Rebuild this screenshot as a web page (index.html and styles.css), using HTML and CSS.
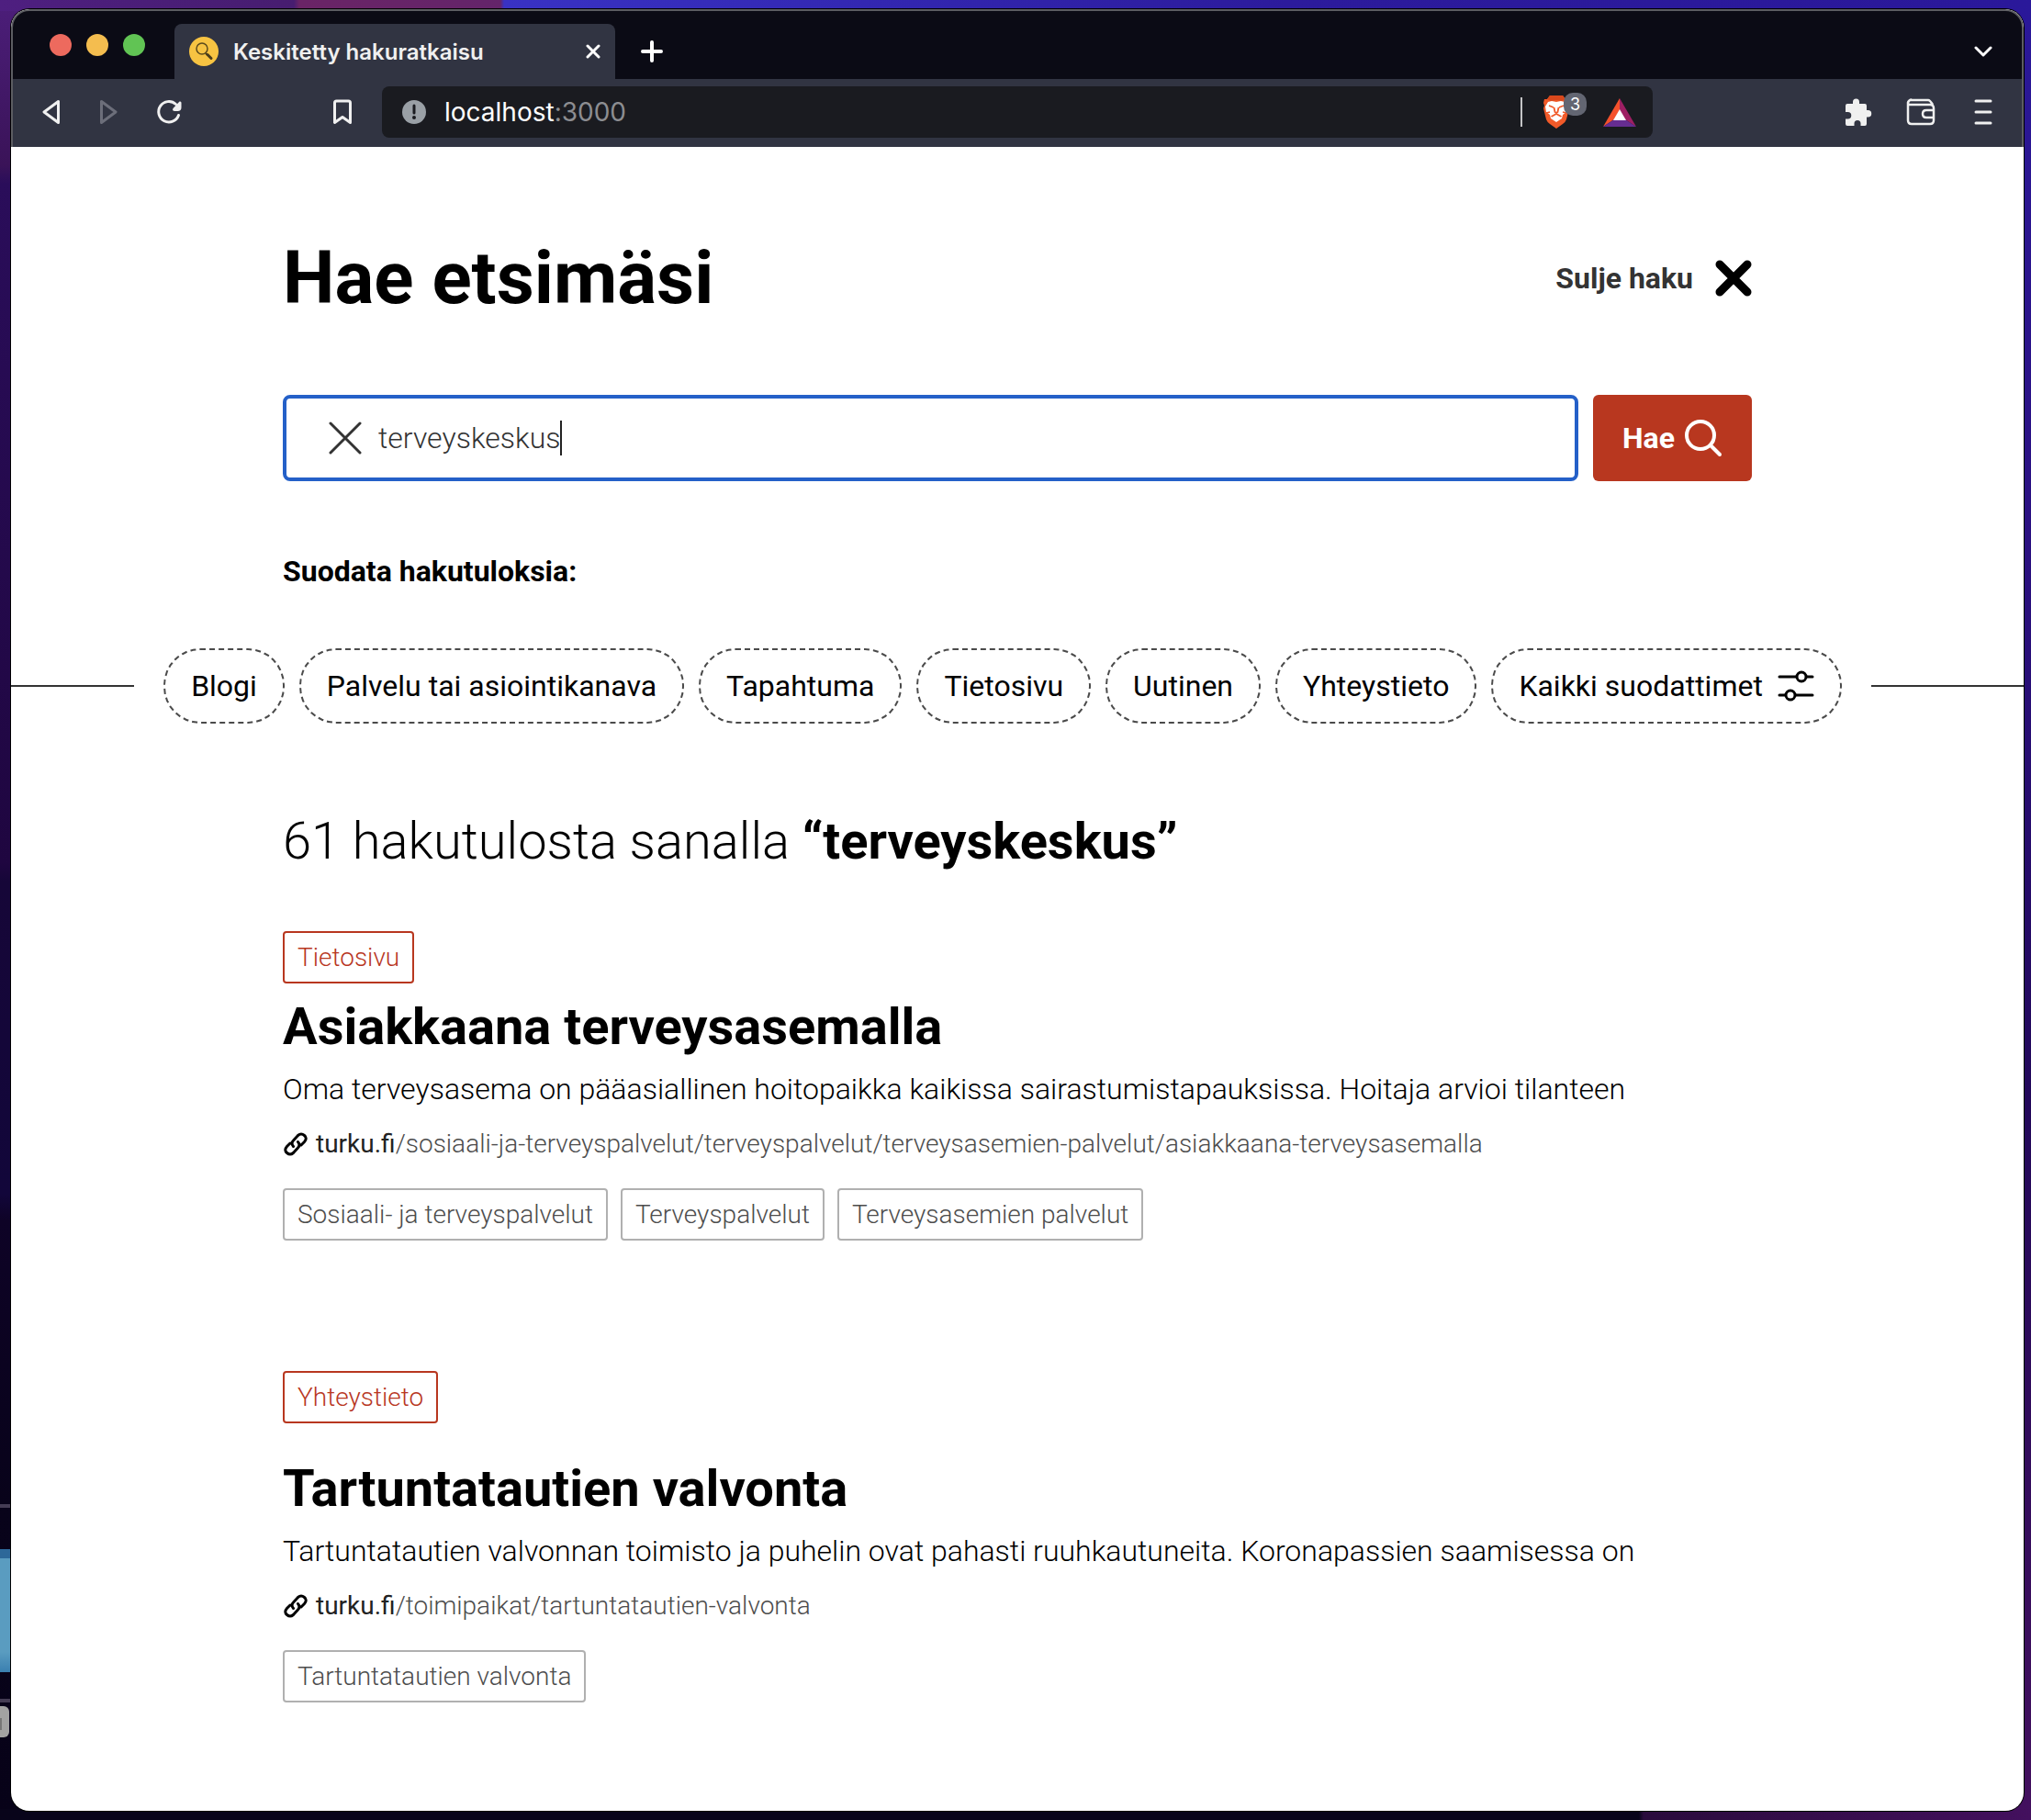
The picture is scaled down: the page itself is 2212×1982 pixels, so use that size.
FILE: index.html
```html
<!DOCTYPE html>
<html lang="fi">
<head>
<meta charset="utf-8">
<title>Keskitetty hakuratkaisu</title>
<link rel="stylesheet" href="styles.css">
</head>
<body>
<div class="desktop-item divider-upper"></div>
<div class="desktop-item thumbnail"></div>
<div class="desktop-item divider-lower"></div>
<div class="desktop-item file-label"></div>

<div class="window">
  <div class="chrome">
    <div class="tab-strip">
      <div class="traffic">
        <button class="light close" aria-label="Sulje ikkuna"></button>
        <button class="light minimize" aria-label="Pienennä"></button>
        <button class="light zoom" aria-label="Suurenna"></button>
      </div>
      <div class="tab">
        <svg width="32" height="32" viewBox="0 0 32 32" fill="none"><circle cx="16" cy="16" r="16" fill="#f7c342"/><circle cx="14" cy="13" r="6" stroke="#5c4a1c" stroke-width="1.500"/><path d="M18 18l2 2" stroke="#4a3c1a" stroke-width="2"/><path d="M20 19.500l4 4" stroke="#4a3c1a" stroke-width="3" stroke-linecap="round"/></svg>
        <span class="tab-title">Keskitetty hakuratkaisu</span>
        <button class="icon-button" aria-label="Sulje välilehti"><svg width="16" height="16" viewBox="0 0 16 16" stroke="#fff" stroke-width="3" stroke-linecap="round"><path d="M2 2l12 12M14 2L2 14"/></svg></button>
      </div>
      <button class="icon-button new-tab" aria-label="Uusi välilehti"><svg width="24" height="24" viewBox="0 0 24 24" stroke="#fff" stroke-width="4" stroke-linecap="round"><path d="M12 2v20M2 12h20"/></svg></button>
      <button class="icon-button tab-menu" aria-label="Välilehdet"><svg width="20" height="14" viewBox="0 0 20 14" fill="none" stroke="#fff" stroke-width="3" stroke-linecap="round" stroke-linejoin="round"><path d="M2 3l8 8 8-8"/></svg></button>
    </div>
    <div class="toolbar">
      <div class="nav">
        <button class="icon-button" aria-label="Takaisin"><svg width="20" height="28" viewBox="0 0 20 28" fill="none" stroke="#f0f0f0" stroke-width="3" stroke-linejoin="round"><path d="M17.500 2.500v23L2 14z"/></svg></button>
        <button class="icon-button" aria-label="Eteenpäin"><svg width="20" height="28" viewBox="0 0 20 28" fill="none" stroke="#6c6e7a" stroke-width="3" stroke-linejoin="round"><path d="M2.500 2.500v23L18 14z"/></svg></button>
        <button class="icon-button" aria-label="Lataa uudelleen"><svg width="28" height="28" viewBox="0 0 28 28" fill="none"><path d="M21.500 5.500A11.200 11.200 0 1 0 24.500 17.500" stroke="#f0f0f0" stroke-width="3" stroke-linecap="round"/><path d="M25.500 2.500q2-.5 2 1.500v5q0 4-4 4h-3q-3.500 0-2-3z" fill="#f0f0f0"/></svg></button>
      </div>
      <button class="icon-button bookmark" aria-label="Lisää kirjanmerkki"><svg width="22" height="28" viewBox="0 0 22 28" fill="none" stroke="#f0f0f0" stroke-width="3" stroke-linejoin="round"><path d="M2.500 4q0-2 2-2h13q2 0 2 2v21.500L11 19.500l-8.500 6z"/></svg></button>
      <div class="address">
        <svg width="26" height="26" viewBox="0 0 26 26"><circle cx="13" cy="13" r="13" fill="#9aa0a6"/><path d="M13 6v8" stroke="#1a1b20" stroke-width="3" stroke-linecap="round"/><circle cx="13" cy="19" r="2" fill="#1a1b20"/></svg>
        <span class="url">localhost<span class="port">:3000</span></span>
        <span class="address-rule"></span>
        <button class="icon-button shield" aria-label="Brave Shields">
          <svg width="30" height="36" viewBox="0 0 30 36" fill="none"><path d="M8 0h14l3 4 3 0 1 4-1 3 1 3-3 12q-1 3-4 5l-7 5-7-5q-3-2-4-5L1 14l1-3-1-3 1-4 3 0z" fill="#f15a29"/><path d="M8 0h14l3 4-4 2-6-1-6 1-4-2z" fill="#d9481c"/><path d="M6 7l4-1 5 1 5-1 4 1 3 5-1 6-4 3-1 4-6 4-6-4-1-4-4-3-1-6z" fill="#fff"/><path d="M7 11l5 2M23 11l-5 2M12.500 13l1 5 1.500 1 1.500-1 1-5M9.500 23l5.500-3 5.500 3M4 19l4-1M26 19l-4-1" stroke="#f15a29" stroke-width="1.800"/></svg>
          <span class="badge">3</span>
        </button>
        <button class="icon-button rewards" aria-label="Brave Rewards"><svg width="36" height="31" viewBox="0 0 36 31"><path d="M18 0L0 31l12-8 6-10z" fill="#f4512c"/><path d="M18 0l18 31-12-8-6-10z" fill="#9e1f63"/><path d="M0 31h36l-12-8H12z" fill="#662d91"/><path d="M18 12l7 12H11z" fill="#fff"/></svg></button>
      </div>
      <div class="tools">
        <button class="icon-button" aria-label="Laajennukset"><svg width="30" height="30" viewBox="0 0 30 30" fill="#f0f0f0"><path d="M3 6h6V4a3.500 3.500 0 0 1 7 0v2h6q2 0 2 2v5h1.500a3.700 3.700 0 0 1 0 7.500H24V28q0 2-2 2h-4.500v-2.500a3.500 3.500 0 0 0-7 0V30H3q-2 0-2-2v-5.500h2.500a3.500 3.500 0 0 0 0-7.500H1V8q0-2 2-2z"/></svg></button>
        <button class="icon-button" aria-label="Lompakko"><svg width="32" height="30" viewBox="0 0 32 30" fill="none" stroke="#f0f0f0" stroke-width="2.500" stroke-linejoin="round"><path d="M2 5v19q0 4 4 4h20q4 0 4-4V11q0-4-4-4H3Q1 5 3 3t3-1h18q2 0 5 5"/><path d="M30 13h-8q-4 0-4 4t4 4h8"/></svg></button>
        <button class="icon-button" aria-label="Valikko"><svg width="20" height="30" viewBox="0 0 20 30" stroke="#f0f0f0" stroke-width="3" stroke-linecap="round"><path d="M2 3h16M2 15h16M2 27h16"/></svg></button>
      </div>
    </div>
  </div>

  <main class="page">
    <div class="container">
      <header class="page-header">
        <h1>Hae etsimäsi</h1>
        <button class="close-search">Sulje haku <svg width="40" height="40" viewBox="0 0 40 40" stroke="#000" stroke-width="9" stroke-linecap="round"><path d="M5 5l30 30M35 5L5 35"/></svg></button>
      </header>
      <form class="search">
        <div class="field">
          <button type="button" class="clear" aria-label="Tyhjennä"><svg width="36" height="36" viewBox="0 0 36 36" stroke="#333" stroke-width="3" stroke-linecap="round"><path d="M2 2l32 32M34 2L2 34"/></svg></button>
          <input type="text" value="terveyskeskus" aria-label="Hakusana">
          <span class="caret"></span>
        </div>
        <button type="submit" class="submit">Hae <svg width="42" height="42" viewBox="0 0 42 42" fill="none" stroke="#fff" stroke-width="4" stroke-linecap="round"><circle cx="18" cy="18" r="15"/><path d="M29 29l10 10"/></svg></button>
      </form>
      <h2 class="filter-title">Suodata hakutuloksia:</h2>
    </div>

    <div class="filters">
      <span class="line line-start"></span>
      <div class="chips">
        <button class="chip">Blogi</button>
        <button class="chip">Palvelu tai asiointikanava</button>
        <button class="chip">Tapahtuma</button>
        <button class="chip">Tietosivu</button>
        <button class="chip">Uutinen</button>
        <button class="chip">Yhteystieto</button>
        <button class="chip">Kaikki suodattimet <svg width="40" height="36" viewBox="0 0 40 36" fill="none" stroke="#000" stroke-width="3" stroke-linecap="round"><path d="M2 8h18M32 8h6M2 28h6M20 28h18"/><circle cx="26" cy="8" r="5"/><circle cx="14" cy="28" r="5"/></svg></button>
      </div>
      <span class="line line-end"></span>
    </div>

    <div class="container">
      <h2 class="summary">61 hakutulosta sanalla <strong>“terveyskeskus”</strong></h2>

      <article class="result">
        <span class="tag type">Tietosivu</span>
        <h3>Asiakkaana terveysasemalla</h3>
        <p class="excerpt">Oma terveysasema on pääasiallinen hoitopaikka kaikissa sairastumistapauksissa. Hoitaja arvioi tilanteen</p>
        <a class="link" href="#"><svg width="28" height="28" viewBox="0 0 28 28" fill="none" stroke="#000" stroke-width="3" stroke-linecap="round"><path d="M11.500 16.500q-3-3.500 0-6.500l5-5.500q3.500-3 7 0t0 7l-3.500 3.500M16.500 11.500q3 3.500 0 6.500l-5 5.500q-3.500 3-7 0t0-7L8 13"/></svg><span><b>turku.fi</b>/sosiaali-ja-terveyspalvelut/terveyspalvelut/terveysasemien-palvelut/asiakkaana-terveysasemalla</span></a>
        <div class="tags"><span class="tag">Sosiaali- ja terveyspalvelut</span><span class="tag">Terveyspalvelut</span><span class="tag">Terveysasemien palvelut</span></div>
      </article>

      <article class="result contact">
        <span class="tag type">Yhteystieto</span>
        <h3>Tartuntatautien valvonta</h3>
        <p class="excerpt">Tartuntatautien valvonnan toimisto ja puhelin ovat pahasti ruuhkautuneita. Koronapassien saamisessa on</p>
        <a class="link" href="#"><svg width="28" height="28" viewBox="0 0 28 28" fill="none" stroke="#000" stroke-width="3" stroke-linecap="round"><path d="M11.500 16.500q-3-3.500 0-6.500l5-5.500q3.500-3 7 0t0 7l-3.500 3.500M16.500 11.500q3 3.500 0 6.500l-5 5.500q-3.500 3-7 0t0-7L8 13"/></svg><span><b>turku.fi</b>/toimipaikat/tartuntatautien-valvonta</span></a>
        <div class="tags"><span class="tag">Tartuntatautien valvonta</span></div>
      </article>
    </div>
  </main>
</div>
</body>
</html>
```
FILE: styles.css
```css
* {
  box-sizing: border-box;
}

body {
  margin: 0;
  min-height: 100vh;
  padding: 10px 8px 10px 12px;
  display: flex;
  position: relative;
  font-family: Roboto, "Liberation Sans", sans-serif;
  background:
    linear-gradient(90deg, #4e1f80 0, #471d70 320px, #6a2466 326px, #64246a 545px, #3932c4 549px, #2c1b9c 1400px, #2a189a) top / 100% 12px no-repeat,
    linear-gradient(90deg, #08041a 0 1785px, #2a0b3c 1790px, #43105e) bottom / 100% 12px no-repeat,
    linear-gradient(#4c1e7a, #3a1358 180px, #2a0d5a 200px, #1f0640 940px, #160638 960px, #12063a 1300px, #0e0326 1330px, #08031a 1640px, #070218) left / 50% 100% no-repeat,
    linear-gradient(#2a189a, #2a1080 600px, #22085a 1200px, #43105e) right / 50% 100% no-repeat;
}

button {
  margin: 0;
  padding: 0;
  border: 0;
  background: none;
  color: inherit;
  font: inherit;
}

svg {
  display: block;
  flex: none;
}

/* Desktop items that peek out from behind the window */
.desktop-item {
  position: absolute;
  left: 0;
  width: 12px;
}

.divider-upper,
.divider-lower {
  top: 1638px;
  height: 4px;
  background: #443c54;
}

.divider-lower {
  top: 1850px;
}

.thumbnail {
  top: 1687px;
  height: 134px;
  background: linear-gradient(#2d6899 0 10px, #5a9cc0 10px 112px, #3a7fb0);
}

.file-label {
  top: 1858px;
  width: 10px;
  height: 34px;
  border-radius: 0 6px 6px 0;
  background: linear-gradient(#777, #777) 0 13px / 2px 13px no-repeat, #a2a2a2;
}

.window {
  position: relative;
  flex: 1;
  min-width: 0;
  display: flex;
  flex-direction: column;
  border-radius: 20px;
  overflow: hidden;
  background: #fff;
  box-shadow: 0 0 0 1px #000;
}

/* Browser chrome */
.chrome {
  border: 2px solid #5c5d62;
  border-bottom: 0;
  border-radius: 20px 20px 0 0;
  background: #0b0b15;
  color: #fff;
  font-family: Inter, "Liberation Sans", sans-serif;
  overflow: hidden;
}

.icon-button {
  display: flex;
  align-items: center;
  justify-content: center;
}

.tab-strip {
  display: flex;
  align-items: center;
  height: 74px;
  padding: 14px 32px 0 40px;
}

.traffic {
  display: flex;
  gap: 16px;
  width: 136px;
  margin-bottom: 14px;
}

.light {
  width: 24px;
  height: 24px;
  border-radius: 50%;
}

.close {
  background: #ed6a5e;
}

.minimize {
  background: #f4bd4f;
}

.zoom {
  background: #61c454;
}

.tab {
  display: flex;
  align-items: center;
  gap: 16px;
  width: 480px;
  height: 60px;
  padding: 0 16px;
  border-radius: 8px 8px 0 0;
  background: #313442;
}

.tab-title {
  flex: 1;
  font-size: 24px;
  font-weight: 600;
  color: #f0f0f0;
}

.new-tab {
  margin-left: 28px;
}

.tab-menu {
  margin-left: auto;
}

.toolbar {
  display: flex;
  align-items: center;
  height: 74px;
  padding: 0 24px 2px 32px;
  background: #313442;
}

.nav {
  display: flex;
  gap: 42px;
}

.bookmark {
  margin-left: 164px;
}

.address {
  display: flex;
  align-items: center;
  width: 1384px;
  height: 56px;
  margin-left: 32px;
  padding: 0 18px 0 22px;
  border-radius: 8px;
  background: #1a1b20;
}

.url {
  flex: 1;
  margin-left: 20px;
  font-size: 28px;
}

.port {
  color: #8c8d91;
}

.address-rule {
  width: 2px;
  height: 32px;
  background: #c4c4c6;
}

.shield {
  position: relative;
  margin-left: 22px;
}

.badge {
  position: absolute;
  top: -3px;
  left: 23px;
  width: 25px;
  height: 25px;
  border-radius: 10px;
  background: #636672;
  font-size: 18px;
  line-height: 25px;
  text-align: center;
}

.rewards {
  margin-left: 36px;
}

.tools {
  display: flex;
  align-items: center;
  gap: 32px;
  margin-left: auto;
}

.tools .icon-button {
  width: 36px;
}

/* Search page */
.page {
  flex: 1;
  padding: 95px 0 108px;
  color: #000;
}

.container {
  max-width: 1600px;
  margin: 0 auto;
}

h1,
h2,
h3,
p {
  margin: 0;
}

.page-header {
  display: flex;
  align-items: center;
  justify-content: space-between;
}

h1 {
  font-size: 80px;
  line-height: 96px;
  font-weight: 700;
}

.close-search {
  display: flex;
  align-items: center;
  gap: 24px;
  color: #333;
  font-size: 32px;
  font-weight: 700;
}

.search {
  display: flex;
  gap: 16px;
  margin-top: 79px;
}

.field {
  position: relative;
  flex: 1;
  display: flex;
  align-items: center;
  gap: 18px;
  height: 94px;
  padding: 0 46px;
  border: 4px solid #2460c8;
  border-radius: 8px;
}

.field input {
  flex: 1;
  min-width: 0;
  padding: 0;
  border: 0;
  outline: 0;
  background: none;
  color: #333;
  font: 300 32px/40px Roboto, sans-serif;
}

.caret {
  position: absolute;
  top: 24px;
  left: 298px;
  width: 2px;
  height: 38px;
  background: #222;
}

.submit {
  display: flex;
  align-items: center;
  gap: 10px;
  padding: 0 32px;
  border-radius: 6px;
  background: #b8371f;
  color: #fff;
  font-size: 32px;
  font-weight: 700;
}

.filter-title {
  margin-top: 79px;
  font-size: 32px;
  line-height: 38px;
  font-weight: 700;
}

.filters {
  display: flex;
  align-items: center;
  gap: 32px;
  margin-top: 65px;
}

.line {
  flex: 1 1 0;
  height: 2px;
  background: #333;
}

.line-end {
  flex-basis: 32px;
}

.chips {
  display: flex;
  gap: 16px;
}

.chip {
  display: flex;
  align-items: center;
  gap: 16px;
  height: 82px;
  padding: 0 28px;
  border: 2px dashed #4a4a4a;
  border-radius: 40px;
  font-size: 32px;
  white-space: nowrap;
}

.summary {
  margin-top: 94px;
  font-size: 56px;
  line-height: 68px;
  font-weight: 300;
}

.summary strong {
  font-weight: 700;
}

.result {
  display: flex;
  flex-direction: column;
  align-items: flex-start;
  margin-top: 64px;
}

.result.contact {
  margin-top: 142px;
}

.tag {
  padding: 10px 14px;
  border: 2px solid #b0b0b0;
  border-radius: 4px;
  color: #4d4d4d;
  font-size: 28px;
  line-height: 33px;
  font-weight: 300;
  white-space: nowrap;
}

.type {
  border-color: #b8371f;
  color: #b8371f;
}

h3 {
  margin-top: 13px;
  font-size: 56px;
  line-height: 68px;
  font-weight: 700;
}

.contact h3 {
  margin-top: 37px;
}

.excerpt {
  margin-top: 10px;
  font-size: 32px;
  line-height: 48px;
  font-weight: 300;
}

.link {
  display: flex;
  align-items: center;
  gap: 8px;
  margin-top: 15px;
  color: #4d4d4d;
  font-size: 28px;
  line-height: 42px;
  font-weight: 300;
  text-decoration: none;
}

.link b {
  color: #222;
  font-weight: 400;
}

.tags {
  display: flex;
  flex-wrap: wrap;
  gap: 14px;
  margin-top: 27px;
}
```
